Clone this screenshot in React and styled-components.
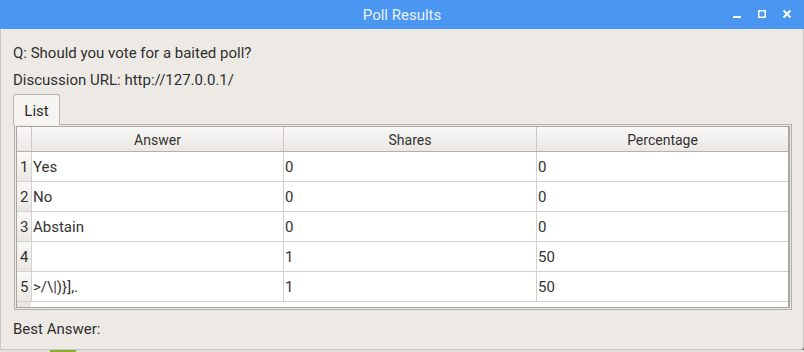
import React from 'react';
import styled, { createGlobalStyle } from 'styled-components';

const GlobalStyle = createGlobalStyle`
  html, body {
    margin: 0;
    padding: 0;
    background: #6b6b6b;
  }
  body {
    font-family: Roboto, 'Liberation Sans', sans-serif;
    font-size: 14px;
    color: #2f2f2f;
  }
`;

const Window = styled.div`
  width: 804px;
  height: 350px;
  box-sizing: border-box;
  background: #edeae6;
  border: 1px solid #c9c6c1;
  border-top: none;
  border-bottom-right-radius: 4px;
  display: flex;
  flex-direction: column;
`;

const TitleBar = styled.div`
  height: 29px;
  margin: 0 -1px;
  background: #4a96f0;
  color: #e9f1fd;
  font-size: 15px;
  display: flex;
  align-items: center;
  justify-content: center;
  position: relative;
`;

const WindowButtons = styled.div`
  position: absolute;
  right: 12px;
  top: 9px;
  display: flex;
  gap: 15px;
  align-items: center;
`;

const Content = styled.div`
  flex: 1;
  display: flex;
  flex-direction: column;
  padding: 14px 11px 0 12px;
`;

const Label = styled.div`
  line-height: 20px;
  height: 20px;
  font-size: 15px;
  margin-bottom: ${(p) => p.$gap || 0}px;
`;

const TabBar = styled.div`
  display: flex;
  height: 31px;
  position: relative;
  z-index: 1;
  margin-bottom: -1px;
`;

const Tab = styled.div`
  width: 47px;
  height: 31px;
  box-sizing: border-box;
  border: 1px solid #b9b6b1;
  border-bottom: none;
  border-radius: 3px 3px 0 0;
  background: #f6f4f1;
  display: flex;
  align-items: center;
  justify-content: center;
  padding-top: 1px;
  font-size: 15px;
  color: #2a2a2a;
`;

const Pane = styled.div`
  margin-left: 1px;
  height: 186px;
  box-sizing: border-box;
  border: 1px solid #b3b0ab;
  padding: 1px;
  background: #edeae6;
`;

const TableFrame = styled.div`
  height: 100%;
  box-sizing: border-box;
  border: 1px solid #a9a6a1;
  border-right-width: 2px;
  background: #fff;
  display: flex;
  flex-direction: column;
`;

const Row = styled.div`
  display: grid;
  grid-template-columns: 14px 252px 253px 1fr;
  height: ${(p) => (p.$header ? 24 : 29)}px;
  border-bottom: 1px solid ${(p) => (p.$header ? '#b4b1ac' : '#d0d0d0')};
`;

const HeadCell = styled.div`
  background: linear-gradient(#f9f8f6, #ebe8e4);
  border-left: 1px solid ${(p) => (p.$first ? 'transparent' : '#cdcac5')};
  display: flex;
  align-items: center;
  justify-content: center;
  padding-top: 2px;
  font-size: 14px;
  color: #333;
`;

const RowHead = styled.div`
  background: linear-gradient(#f9f8f6, #ebe8e4);
  display: flex;
  align-items: center;
  padding: 1px 0 0 3px;
  font-size: 15px;
  color: #333;
`;

const Cell = styled.div`
  border-left: 1px solid #d0d0d0;
  display: flex;
  align-items: center;
  padding: 1px 0 0 1px;
  font-size: 15px;
  color: #333;
`;

const Filler = styled.div`
  flex: 1;
  display: grid;
  grid-template-columns: 14px 1fr;
  div:first-child {
    background: #ebe8e4;
  }
`;

const Footer = styled.div`
  margin-top: 9px;
  line-height: 20px;
  font-size: 15px;
`;

const Desktop = styled.div`
  height: 2px;
  background: #e3e1dc;
  position: relative;
  &::after {
    content: '';
    position: absolute;
    left: 50px;
    width: 26px;
    top: 0;
    bottom: 0;
    background: #8fae2c;
  }
`;

const rows = [
  ['1', 'Yes', '0', '0'],
  ['2', 'No', '0', '0'],
  ['3', 'Abstain', '0', '0'],
  ['4', '', '1', '50'],
  ['5', '>/\\|)}],.', '1', '50'],
];

export default function App() {
  return (
    <>
      <GlobalStyle />
      <Window>
        <TitleBar>
          Poll Results
          <WindowButtons>
            <svg width="10" height="10" viewBox="0 0 10 10">
              <rect x="1" y="7" width="8" height="2" fill="#fff" />
            </svg>
            <svg width="10" height="10" viewBox="0 0 10 10">
              <rect x="1.75" y="1.75" width="6.5" height="6.5" fill="none" stroke="#fff" strokeWidth="1.5" />
            </svg>
            <svg width="10" height="10" viewBox="0 0 10 10">
              <path d="M1.5 1.5 L8.5 8.5 M8.5 1.5 L1.5 8.5" stroke="#fff" strokeWidth="2" />
            </svg>
          </WindowButtons>
        </TitleBar>
        <Content>
          <Label $gap={7}>Q: Should you vote for a baited poll?</Label>
          <Label $gap={4}>Discussion URL: http://127.0.0.1/</Label>
          <TabBar>
            <Tab>List</Tab>
          </TabBar>
          <Pane>
            <TableFrame>
              <Row $header>
                <HeadCell $first />
                <HeadCell>Answer</HeadCell>
                <HeadCell>Shares</HeadCell>
                <HeadCell>Percentage</HeadCell>
              </Row>
              {rows.map(([n, a, s, p]) => (
                <Row key={n}>
                  <RowHead>{n}</RowHead>
                  <Cell>{a}</Cell>
                  <Cell>{s}</Cell>
                  <Cell>{p}</Cell>
                </Row>
              ))}
              <Filler>
                <div />
                <div />
              </Filler>
            </TableFrame>
          </Pane>
          <Footer>Best Answer:</Footer>
        </Content>
      </Window>
      <Desktop />
    </>
  );
}
